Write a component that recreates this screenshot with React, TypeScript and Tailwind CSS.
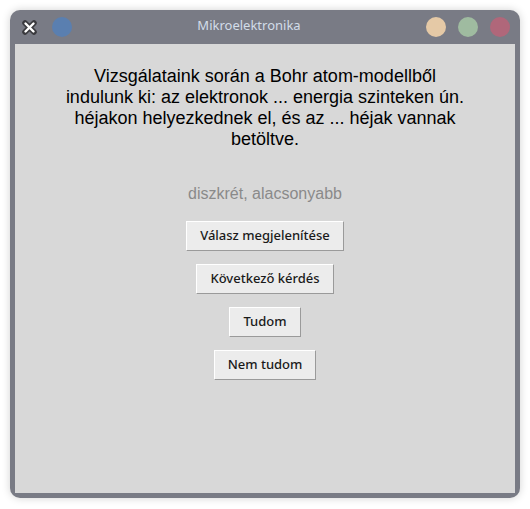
export default function App() {
  const gombok = ["Válasz megjelenítése", "Következő kérdés", "Tudom", "Nem tudom"];

  return (
    <main className="w-[530px] h-[509px] bg-white p-[10px] pb-[11px]">
      <div className="h-full flex flex-col rounded-[10px] bg-[#797b85] px-[5px] pb-[5px] shadow-[0_0_8px_rgba(0,0,0,0.18)]">
        {/* title bar */}
        <div className="h-[34px] flex items-center relative" style={{ fontFamily: "'Noto Sans', sans-serif" }}>
          <div className="ml-[6px] w-[17px] h-[17px] flex items-center justify-center">
            <svg width="17" height="17" viewBox="0 0 17 17">
              <path d="M4 4 L13 13 M13 4 L4 13" stroke="#3a3a3e" strokeWidth="5.5" strokeLinecap="round" />
              <path d="M4.5 4.5 L12.5 12.5 M12.5 4.5 L4.5 12.5" stroke="#ffffff" strokeWidth="2.4" strokeLinecap="round" />
            </svg>
          </div>
          <div className="ml-[14px] w-[20px] h-[20px] rounded-full bg-[#5a7fb0]" />
          <div className="absolute left-0 right-[32px] top-[6px] text-center text-[13px] text-[#d3dde9]">Mikroelektronika</div>
          <div className="ml-auto mr-[5px] flex gap-[12px]">
            <div className="w-[20px] h-[20px] rounded-full bg-[#e5c9a6]" />
            <div className="w-[20px] h-[20px] rounded-full bg-[#9fbba0]" />
            <div className="w-[20px] h-[20px] rounded-full bg-[#b0677a]" />
          </div>
        </div>

        {/* content */}
        <div className="flex-1 bg-[#d8d8d8] flex flex-col items-center pt-[22px] px-[48px]">
          <p className="text-[18px] leading-[21px] text-black text-center" style={{ fontFamily: "'Liberation Sans', Arial, sans-serif" }}>
            Vizsgálataink során a Bohr atom-modellből indulunk ki: az elektronok ... energia szinteken ún. héjakon helyezkednek el, és az ... héjak vannak betöltve.
          </p>
          <p className="mt-[34px] text-[16px] leading-[19px] text-[#8a8a8a]" style={{ fontFamily: "'Liberation Sans', Arial, sans-serif" }}>
            diszkrét, alacsonyabb
          </p>
          <div className="mt-[18px] flex flex-col items-center gap-[13px]">
            {gombok.map((g, i) => (
              <button
                key={i}
                className="h-[30px] px-[13px] bg-[#ececec] border border-t-white border-l-white border-b-[#9a9a9a] border-r-[#9a9a9a] text-[13px] font-medium text-[#1a1a1a]"
                style={{ fontFamily: "'Noto Sans', sans-serif" }}
              >
                {g}
              </button>
            ))}
          </div>
        </div>
      </div>
    </main>
  );
}
